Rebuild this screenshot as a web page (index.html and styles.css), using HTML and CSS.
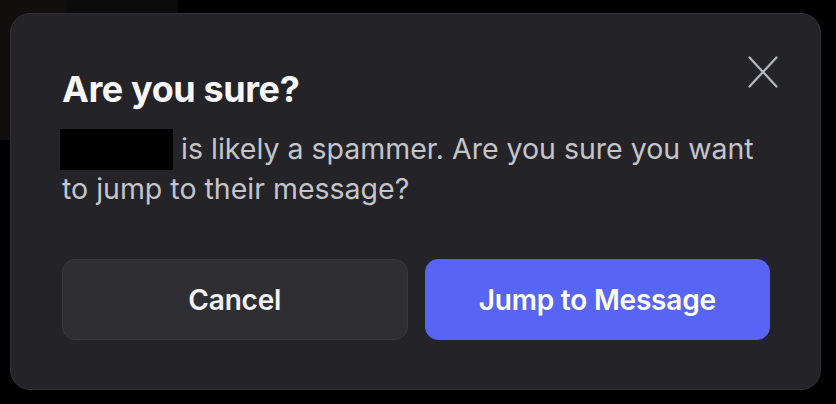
FILE: index.html
```html
<!DOCTYPE html>
<html lang="en">
<head>
<meta charset="utf-8">
<title>Are you sure?</title>
<link rel="stylesheet" href="styles.css">
</head>
<body>
  <div class="modal" role="dialog" aria-labelledby="modal-title">
    <button class="close" aria-label="Close">
      <svg viewBox="0 0 30 32" width="30" height="32" aria-hidden="true">
        <path d="M1.5 1.5 L28.5 30.5 M28.5 1.5 L1.5 30.5" stroke="currentColor" stroke-width="2.2" stroke-linecap="round" fill="none"/>
      </svg>
    </button>
    <h1 class="title" id="modal-title">Are you sure?</h1>
    <p class="body"><span class="redacted"></span> is likely a spammer. Are you sure you want to jump to their message?</p>
    <div class="actions">
      <button class="btn btn-secondary">Cancel</button>
      <button class="btn btn-primary">Jump to Message</button>
    </div>
  </div>
</body>
</html>
```
FILE: styles.css
```css
html, body {
  margin: 0;
  padding: 0;
}
body {
  width: 836px;
  height: 404px;
  overflow: hidden;
  background:
    linear-gradient(#100f0e, #100f0e) 0 0 / 67px 140px no-repeat,
    linear-gradient(#0b0b0b, #0b0b0b) 67px 0 / 111px 140px no-repeat,
    #000;
  font-family: Inter, "Noto Sans", "Liberation Sans", sans-serif;
  padding: 13px 0 0 10px;
  box-sizing: border-box;
}
.modal {
  position: relative;
  width: 811px;
  height: 377px;
  box-sizing: border-box;
  background: #232328;
  border: 1px solid #303036;
  border-radius: 20px;
  padding: 53px 50px 49px 51px;
  display: flex;
  flex-direction: column;
}
.close {
  position: absolute;
  top: 42px;
  right: 42px;
  background: none;
  border: 0;
  padding: 0;
  color: #b5bac1;
  width: 30px;
  height: 32px;
  cursor: pointer;
}
.close svg {
  display: block;
}
.title {
  margin: 0;
  color: #f7f7f8;
  font-size: 36px;
  line-height: 44px;
  font-weight: 700;
  letter-spacing: -0.4px;
}
.body {
  margin: 19px 0 0;
  color: #c4c5ca;
  font-size: 28.5px;
  line-height: 37px;
  font-weight: 400;
}
.redacted {
  display: inline-block;
  vertical-align: top;
  width: 113px;
  height: 41px;
  background: #000;
  margin-left: -2px;
  margin-top: -1px;
}
.actions {
  margin-top: auto;
  display: flex;
  gap: 17px;
}
.btn {
  flex: 1;
  height: 81px;
  border-radius: 13px;
  font-family: inherit;
  font-size: 28px;
  font-weight: 600;
  letter-spacing: -0.2px;
  color: #f2f3f5;
  cursor: pointer;
}
.btn-secondary {
  background: #2e2e33;
  border: 1px solid #37373d;
}
.btn-primary {
  background: #5865f2;
  border: 1px solid #5865f2;
  color: #ffffff;
}
```
